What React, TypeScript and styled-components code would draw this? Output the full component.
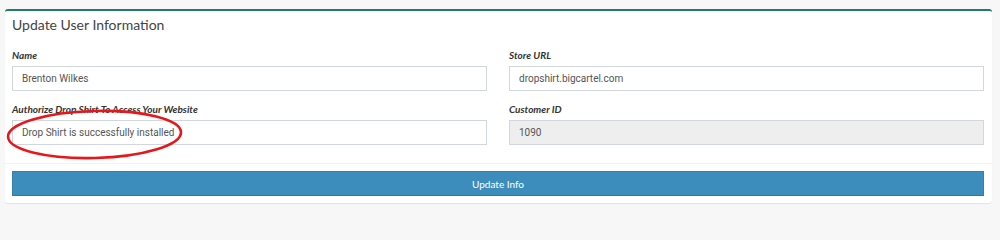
import { ReactElement } from 'react';
import styled, { createGlobalStyle } from 'styled-components';

const GlobalStyle = createGlobalStyle`
  html, body {
    margin: 0;
    padding: 0;
    background: #f7f7f7;
  }
  body {
    font-family: Lato, 'Noto Sans', sans-serif;
  }
`;

const Page = styled.div`
  padding: 9px 8px 10px 5px;
`;

const Panel = styled.div`
  position: relative;
  background: #fff;
  border-top: 2px solid #227a6f;
  border-radius: 3px;
  box-shadow: 0 1px 1px rgba(0, 0, 0, 0.08);
`;

const Header = styled.div`
  padding: 4px 7px 13px;
`;

const Title = styled.h3`
  margin: 0;
  font-size: 14px;
  font-weight: 400;
  color: #444;
  line-height: 20px;
`;

const Body = styled.div`
  display: grid;
  grid-template-columns: 1fr 1fr;
  column-gap: 22px;
  row-gap: 11px;
  padding: 0 8px 18px 7px;
`;

const Field = styled.div`
  display: flex;
  flex-direction: column;
  gap: 4px;
`;

const Label = styled.label`
  font-size: 10px;
  font-style: italic;
  font-weight: 700;
  color: #333;
  line-height: 14px;
`;

const Input = styled.div<{ $disabled?: boolean }>`
  height: 25px;
  box-sizing: border-box;
  border: 1px solid #d2d6de;
  background: ${(p) => (p.$disabled ? '#eee' : '#fff')};
  padding: 0 9px;
  display: flex;
  align-items: center;
  font-family: Roboto, 'Noto Sans', sans-serif;
  font-size: 10px;
  color: #555;
`;

const Footer = styled.div`
  border-top: 1px solid #f4f4f4;
  padding: 7px 8px 7px 7px;
`;

const Button = styled.button`
  display: block;
  width: 100%;
  height: 25px;
  background: #3c8dbc;
  border: 1px solid #367fa9;
  border-bottom-color: #2f78a3;
  border-radius: 0;
  color: #fff;
  font-family: Lato, 'Noto Sans', sans-serif;
  font-size: 10px;
`;

const Mark = styled.svg`
  position: absolute;
  left: 0;
  top: 97px;
  pointer-events: none;
`;

interface FieldProps {
  label: string;
  value: string;
  disabled?: boolean;
}

const FormField = ({ label, value, disabled }: FieldProps): ReactElement => (
  <Field>
    <Label>{label}</Label>
    <Input $disabled={disabled}>{value}</Input>
  </Field>
);

const App = (): ReactElement => (
  <Page>
    <GlobalStyle />
    <Panel>
      <Header>
        <Title>Update User Information</Title>
      </Header>
      <Body>
        <FormField label="Name" value="Brenton Wilkes" />
        <FormField label="Store URL" value="dropshirt.bigcartel.com" />
        <FormField
          label="Authorize Drop Shirt To Access Your Website"
          value="Drop Shirt is successfully installed"
        />
        <FormField label="Customer ID" value="1090" disabled />
      </Body>
      <Footer>
        <Button>Update Info</Button>
      </Footer>
      {/* red annotation ring drawn over the form */}
      <Mark width="184" height="56" viewBox="0 0 184 56">
        <ellipse
          cx="89.5"
          cy="26.5"
          rx="86.5"
          ry="23.5"
          fill="none"
          stroke="#e8161b"
          strokeWidth="2.6"
          transform="rotate(-1.5 89.5 26.5)"
        />
      </Mark>
    </Panel>
  </Page>
);

export default App;
